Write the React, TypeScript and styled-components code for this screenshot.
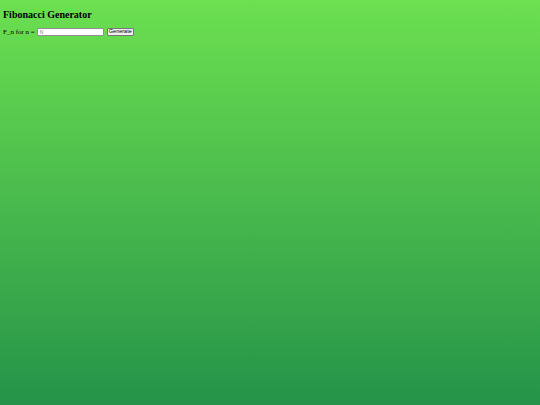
import styled, { createGlobalStyle } from 'styled-components';

const GlobalStyle = createGlobalStyle`
  html, body {
    margin: 0;
    min-height: 100%;
  }
  body {
    padding: 4px 3px;
    height: 405px;
    box-sizing: border-box;
    background: linear-gradient(to bottom, #6ce050 0%, #259349 100%);
    font-family: "Liberation Serif", "Times New Roman", serif;
    color: #000;
  }
`;

const Title = styled.h2`
  font-size: 10px;
  font-weight: bold;
  margin: 5px 0 8px;
`;

const Row = styled.div`
  display: flex;
  align-items: center;
  font-size: 7px;
`;

const Label = styled.span`
  margin-right: 2px;
`;

const NumberInput = styled.input`
  box-sizing: border-box;
  width: 67px;
  height: 8px;
  font-size: 5px;
  padding: 0 2px;
  border: 1px solid #8f8f8f;
  border-radius: 1px;
  background: #fff;
  font-family: "Liberation Sans", Arial, sans-serif;
  &::placeholder {
    color: #777;
  }
`;

const Button = styled.button`
  box-sizing: border-box;
  margin-left: 3px;
  width: 27px;
  height: 8px;
  font-size: 5.5px;
  padding: 0;
  line-height: 1;
  border: 1px solid #767676;
  border-radius: 1px;
  background: #efefef;
  font-family: "Liberation Sans", Arial, sans-serif;
`;

export default function App() {
  return (
    <>
      <GlobalStyle />
      <Title>Fibonacci Generator</Title>
      <Row>
        <Label>F_n for n =</Label>
        <NumberInput placeholder="N" />
        <Button>Generate</Button>
      </Row>
    </>
  );
}
